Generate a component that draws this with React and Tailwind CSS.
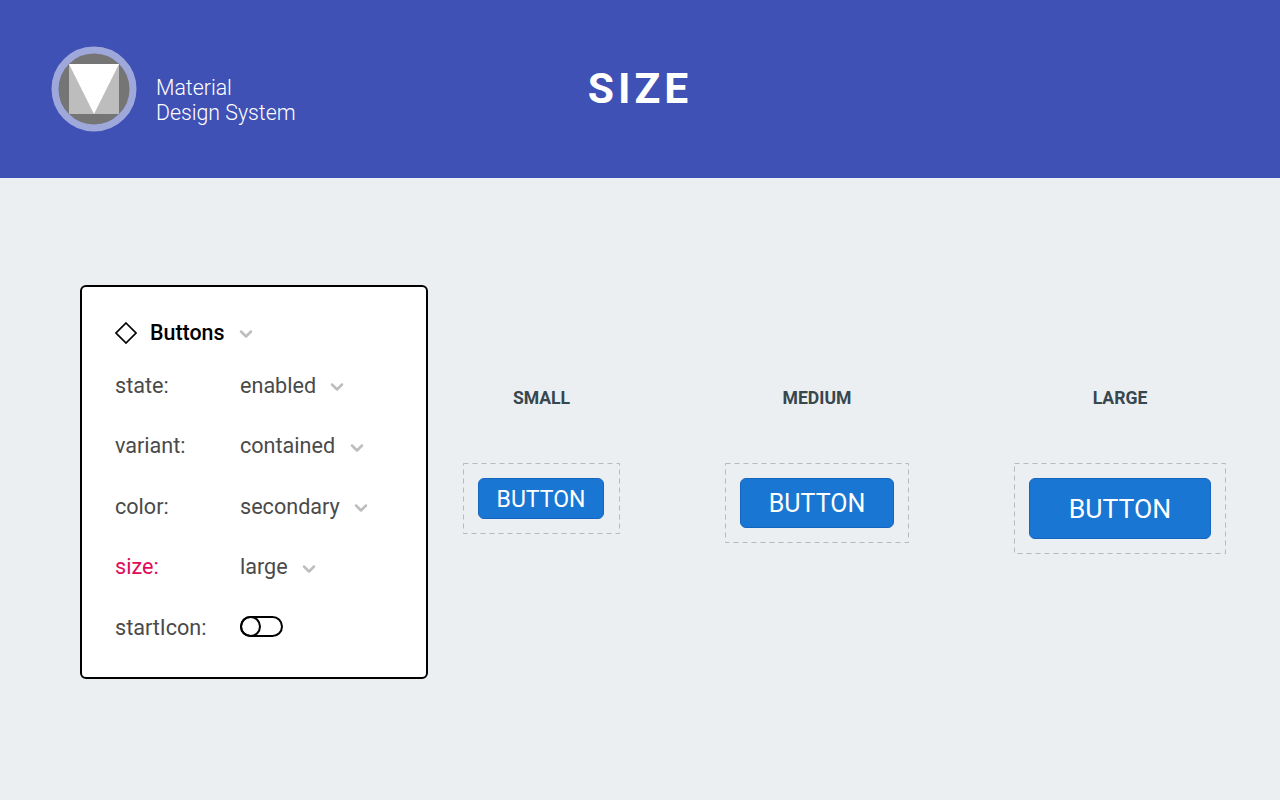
import { ChevronDown } from 'lucide-react';

const rows = [
  { label: 'state:', value: 'enabled', gap: 'ml-[11px]' },
  { label: 'variant:', value: 'contained', gap: 'ml-[12px]' },
  { label: 'color:', value: 'secondary', gap: 'ml-[11px]' },
  { label: 'size:', value: 'large', gap: 'ml-[11px]', active: true },
];

function Logo() {
  return (
    <svg width="86" height="86" viewBox="0 0 86 86" className="shrink-0">
      <circle cx="43" cy="43" r="39" fill="#757575" stroke="#9FA8DA" strokeWidth="7" />
      <rect x="18" y="18" width="50" height="50" fill="#BDBDBD" />
      <path d="M18 18H68L43 68Z" fill="#fff" />
    </svg>
  );
}

function Chevron({ className }) {
  return <ChevronDown size={20} strokeWidth={3} className={`mt-[2px] text-[#bdbdbd] ${className}`} />;
}

function Row({ label, value, gap, active }) {
  return (
    <div className="flex h-[30px] items-center text-[21.6px] text-[#4a4a4a]">
      <span className={`w-[125px] ${active ? 'text-[#e00b5b]' : ''}`}>{label}</span>
      <span>{value}</span>
      <Chevron className={gap} />
    </div>
  );
}

function Sample({ label, w, h, box, btn, children }) {
  return (
    <div className="flex flex-col items-center">
      <div className="flex h-[30px] items-center pt-[2px] text-[17.6px] font-bold text-[#37474f]">{label}</div>
      <div className={`relative mt-[51px] p-[15px] ${box}`}>
        <svg width={w} height={h} className="absolute top-0 left-0">
          <rect x="0.5" y="0.5" width={w - 1} height={h - 1} fill="none" stroke="#b5babd" strokeDasharray="5 4" />
        </svg>
        <button className={`flex items-center justify-center rounded-[6px] border border-[#1565c0] bg-[#1976d2] text-white ${btn}`}>
          {children}
        </button>
      </div>
    </div>
  );
}

export default function App() {
  return (
    <div className="h-[800px] w-[1280px] overflow-hidden bg-[#eceff1] font-['Roboto',sans-serif]">
      <header className="relative flex h-[178px] items-center bg-[#3f51b5] pl-[51px] text-white">
        <Logo />
        <div className="mt-[22px] ml-[19px] text-[21.3px] leading-[25px] font-light">
          <div>Material</div>
          <div>Design System</div>
        </div>
        <h1 className="absolute inset-x-0 top-[62px] text-center text-[42.6px] leading-[52px] font-bold tracking-[4px]">SIZE</h1>
      </header>

      <main className="flex pt-[107px] pl-[80px]">
        <section className="h-[394px] w-[348px] rounded-[6px] border-2 border-black bg-white pt-[31px] pl-[33px]">
          <div className="flex h-[30px] items-center text-[21.4px] font-medium text-black">
            <svg width="22" height="22" viewBox="0 0 22 22" fill="none" stroke="#000" strokeWidth="1.7" className="shrink-0">
              <path d="M11 1 21 11 11 21 1 11Z" />
            </svg>
            <span className="ml-[13px]">Buttons</span>
            <Chevron className="ml-[12px]" />
          </div>
          <div className="mt-[23px] flex flex-col gap-[30.5px]">
            {rows.map((row) => (
              <Row key={row.label} {...row} />
            ))}
            <div className="flex h-[30px] items-center text-[21.6px] text-[#4a4a4a]">
              <span className="w-[125px]">startIcon:</span>
              <div className="relative -mt-[3px] h-[21px] w-[43px] rounded-full border-2 border-black">
                <div className="absolute -top-[2px] -left-[2px] h-[21px] w-[21px] rounded-full border-2 border-black" />
              </div>
            </div>
          </div>
        </section>

        <div className="ml-[35px] flex gap-[105px] pt-[97px]">
          <Sample label="SMALL" w={157} h={71} box="pr-[16px]" btn="h-[41px] w-[126px] pt-[4px] text-[23px]">BUTTON</Sample>
          <Sample label="MEDIUM" w={184} h={80} btn="h-[50px] w-[154px] pt-[2px] text-[25px]">BUTTON</Sample>
          <Sample label="LARGE" w={212} h={91} btn="h-[61px] w-[182px] text-[26.6px]">BUTTON</Sample>
        </div>
      </main>
    </div>
  );
}
